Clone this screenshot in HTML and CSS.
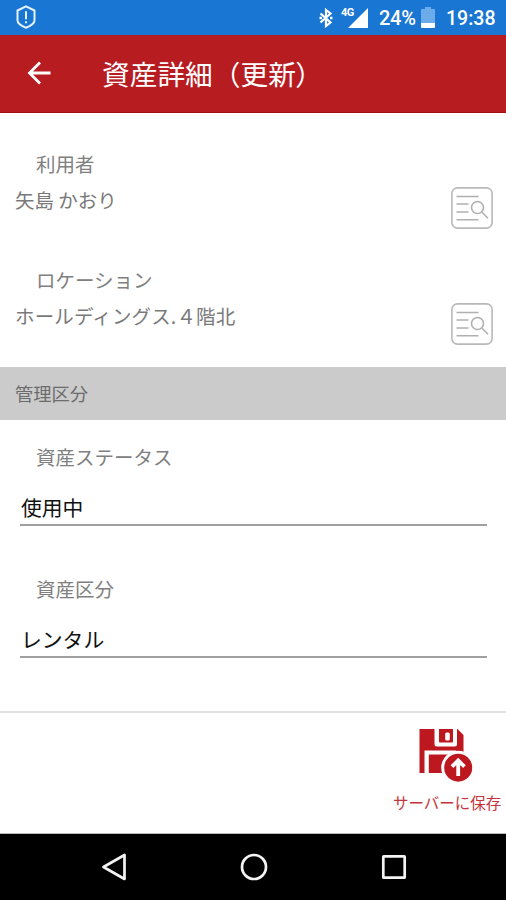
FILE: index.html
```html
<!DOCTYPE html>
<html lang="ja">
<head>
<meta charset="utf-8">
<title>資産詳細（更新）</title>
<link rel="stylesheet" href="styles.css">
</head>
<body>
<div class="screen">
  <div class="status">
    <svg class="shield" width="20" height="24" viewBox="0 0 20 24"><path d="M10 1.300 18.500 5.500v10c0 3-4.300 5.500-8.500 7.200-4.200-1.700-8.500-4.200-8.500-7.200v-10z" fill="none" stroke="#e6f2fc" stroke-width="2" stroke-linejoin="round"/><path d="M10 6.200v8M10 16.200v2" stroke="#e6f2fc" stroke-width="2"/></svg>
    <svg class="bluetooth" width="14" height="20" viewBox="0 0 14 20"><path d="M1.500 5.500 11.500 14.500 7 18V2l4.500 3.500-10 9" fill="none" stroke="#fff" stroke-width="2.200"/><path d="M.5 8.700H3v2.600H.5zM11 8.700h2.500v2.600H11z" fill="#fff"/></svg>
    <div class="signal">
      <svg width="21" height="20" viewBox="0 0 21 20"><path d="M21 0v20H1z" fill="#fff"/></svg>
      <span class="network">4G</span>
    </div>
    <span class="percent">24%</span>
    <svg class="battery" width="14" height="21" viewBox="0 0 14 21"><path d="M4 0h6v2h3q1 0 1 1v13H0V3q0-1 1-1h3z" fill="#6dacea"/><path d="M0 16h14v4q0 1-1 1H1q-1 0-1-1z" fill="#fff"/></svg>
    <span class="clock">19:38</span>
  </div>
  <header class="appbar">
    <svg width="24" height="24" viewBox="0 0 24 24"><path d="M23.500 12H2M13 1.500 2.500 12 13 22.500" fill="none" stroke="#fff" stroke-width="2.800"/></svg>
    <h1>資産詳細（更新<span class="close">）</span></h1>
  </header>
  <main>
    <section class="lookup">
      <div><div class="label">利用者</div><div class="value">矢島 かおり</div></div>
      <svg class="search" width="42" height="42" viewBox="0 0 42 42"><rect x=".9" y=".9" width="40.200" height="40.200" rx="5.500" fill="#fff" stroke="#b9b9b9" stroke-width="1.600"/><path d="M5.500 9.500h22M5.500 17h12M5.500 25h12M5.500 32.700h22M31 25.200l6 6" fill="none" stroke="#b0b0b0" stroke-width="1.600"/><circle cx="26.500" cy="20.500" r="6" fill="none" stroke="#b0b0b0" stroke-width="1.600"/></svg>
    </section>
    <section class="lookup">
      <div><div class="label">ロケーション</div><div class="value location">ホールディングス.４階北</div></div>
      <svg class="search" width="42" height="42" viewBox="0 0 42 42"><rect x=".9" y=".9" width="40.200" height="40.200" rx="5.500" fill="#fff" stroke="#b9b9b9" stroke-width="1.600"/><path d="M5.500 9.500h22M5.500 17h12M5.500 25h12M5.500 32.700h22M31 25.200l6 6" fill="none" stroke="#b0b0b0" stroke-width="1.600"/><circle cx="26.500" cy="20.500" r="6" fill="none" stroke="#b0b0b0" stroke-width="1.600"/></svg>
    </section>
    <h2>管理区分</h2>
    <section class="field">
      <div class="label">資産ステータス</div>
      <div class="input">使用中</div>
    </section>
    <section class="field">
      <div class="label">資産区分</div>
      <div class="input">レンタル</div>
    </section>
  </main>
  <footer class="actions">
    <div class="save">
      <svg width="56" height="56" viewBox="0 0 56 56"><path d="M1.500 2h38l6 6v38h-44z" fill="#bd1820"/><path d="M16.500 1v16q0 2.500 2.500 2.500h17.500q2.500 0 2.500-2.500V1z" fill="#fff"/><path d="M21 2h14v12.500q0 1-1 1H22q-1 0-1-1z" fill="#bd1820"/><rect x="27.200" y="5.500" width="4.600" height="8" rx="1.500" fill="#fff"/><path d="M6.500 23.500H38V47H6.500z" fill="#fff"/><path d="M10.800 27.500H38v18.500H10.800z" fill="#bd1820"/><circle cx="40.200" cy="40.700" r="17" fill="#fff"/><circle cx="40.200" cy="40.700" r="14" fill="#bd1820"/><path d="M40.200 49V34M34 39.700l6.200-6.200 6.200 6.200" fill="none" stroke="#fff" stroke-width="3.800"/></svg>
      <span>サーバーに保存</span>
    </div>
  </footer>
  <nav>
    <svg width="26" height="30" viewBox="0 0 26 30"><path d="M23.500 3v24L2.500 15z" fill="none" stroke="#f4f4f4" stroke-width="2.700" stroke-linejoin="round"/></svg>
    <svg width="28" height="28" viewBox="0 0 28 28"><circle cx="14" cy="14" r="12" fill="none" stroke="#f4f4f4" stroke-width="2.700"/></svg>
    <svg width="26" height="26" viewBox="0 0 26 26"><rect x="2.300" y="2.300" width="21.400" height="21.400" rx=".5" fill="none" stroke="#f4f4f4" stroke-width="2.700"/></svg>
  </nav>
</div>
</body>
</html>
```
FILE: styles.css
```css
* { box-sizing: border-box; }
body { margin: 0; font-family: "Noto Sans CJK JP", sans-serif; }
svg { display: block; flex: none; }
h1, h2 { margin: 0; font-weight: 400; }
.screen { width: 506px; height: 900px; display: flex; flex-direction: column; background: #fff; overflow: hidden; }
.status { height: 35px; flex: none; display: flex; align-items: center; padding: 0 11px 0 16px; background: #1976d2; color: #fff; font: 500 20px/35px Roboto, sans-serif; }
.shield { margin-top: -1px; }
.bluetooth { margin-left: auto; }
.signal { position: relative; margin-left: 14px; }
.network { position: absolute; left: -6px; top: -1px; font: 700 11px/12px Roboto, sans-serif; letter-spacing: -.5px; }
.percent { margin-left: 11px; padding-top: 2px; width: 37px; white-space: nowrap; letter-spacing: -.3px; }
.battery { margin-left: 5px; }
.clock { margin-left: 11px; padding-top: 2px; width: 49px; font-size: 19.500px; white-space: nowrap; }
.appbar { height: 78px; flex: none; display: flex; align-items: center; padding-left: 27px; background: #b71c21; border-bottom: 1px solid #a01018; color: #fff; }
.appbar svg { margin-top: -2px; }
.appbar h1 { margin: -2px 0 0 51px; font-size: 27.700px; line-height: 40px; white-space: nowrap; }
.close { margin-left: -.5px; }
main { height: 598px; flex: none; padding-top: 33px; }
.lookup { height: 116px; display: flex; justify-content: space-between; padding: 0 13px 0 15px; color: #7a7a7a; }
.label { height: 36px; padding-left: 21px; font-size: 19.500px; line-height: 36px; color: #808080; white-space: nowrap; }
.value { font-size: 19.500px; line-height: 36px; white-space: nowrap; }
.location { letter-spacing: .15px; }
.search { margin-top: 41px; }
h2 { height: 53px; margin-top: -11px; padding-left: 15px; background: #cbcbcb; color: #6c6c6c; font-size: 18.300px; line-height: 53px; }
.field { height: 132px; padding: 19px 19px 0 20px; }
.field .label { padding-left: 16px; }
.input { height: 51px; padding-left: 1px; border-bottom: 2px solid #a0a0a0; color: #111; font-size: 20.800px; line-height: 65px; }
.actions { height: 123px; flex: none; display: flex; justify-content: flex-end; border-top: 2px solid #e2e2e2; border-bottom: 1px solid #bbb; padding: 14px 5px 0 0; }
.save { width: 108px; color: #c4343a; font-size: 15.500px; line-height: 38px; white-space: nowrap; }
.save svg { margin-left: 25px; }
nav { flex: 1; display: flex; justify-content: space-between; align-items: center; padding: 0 99px 0 101px; background: #000; }
```
